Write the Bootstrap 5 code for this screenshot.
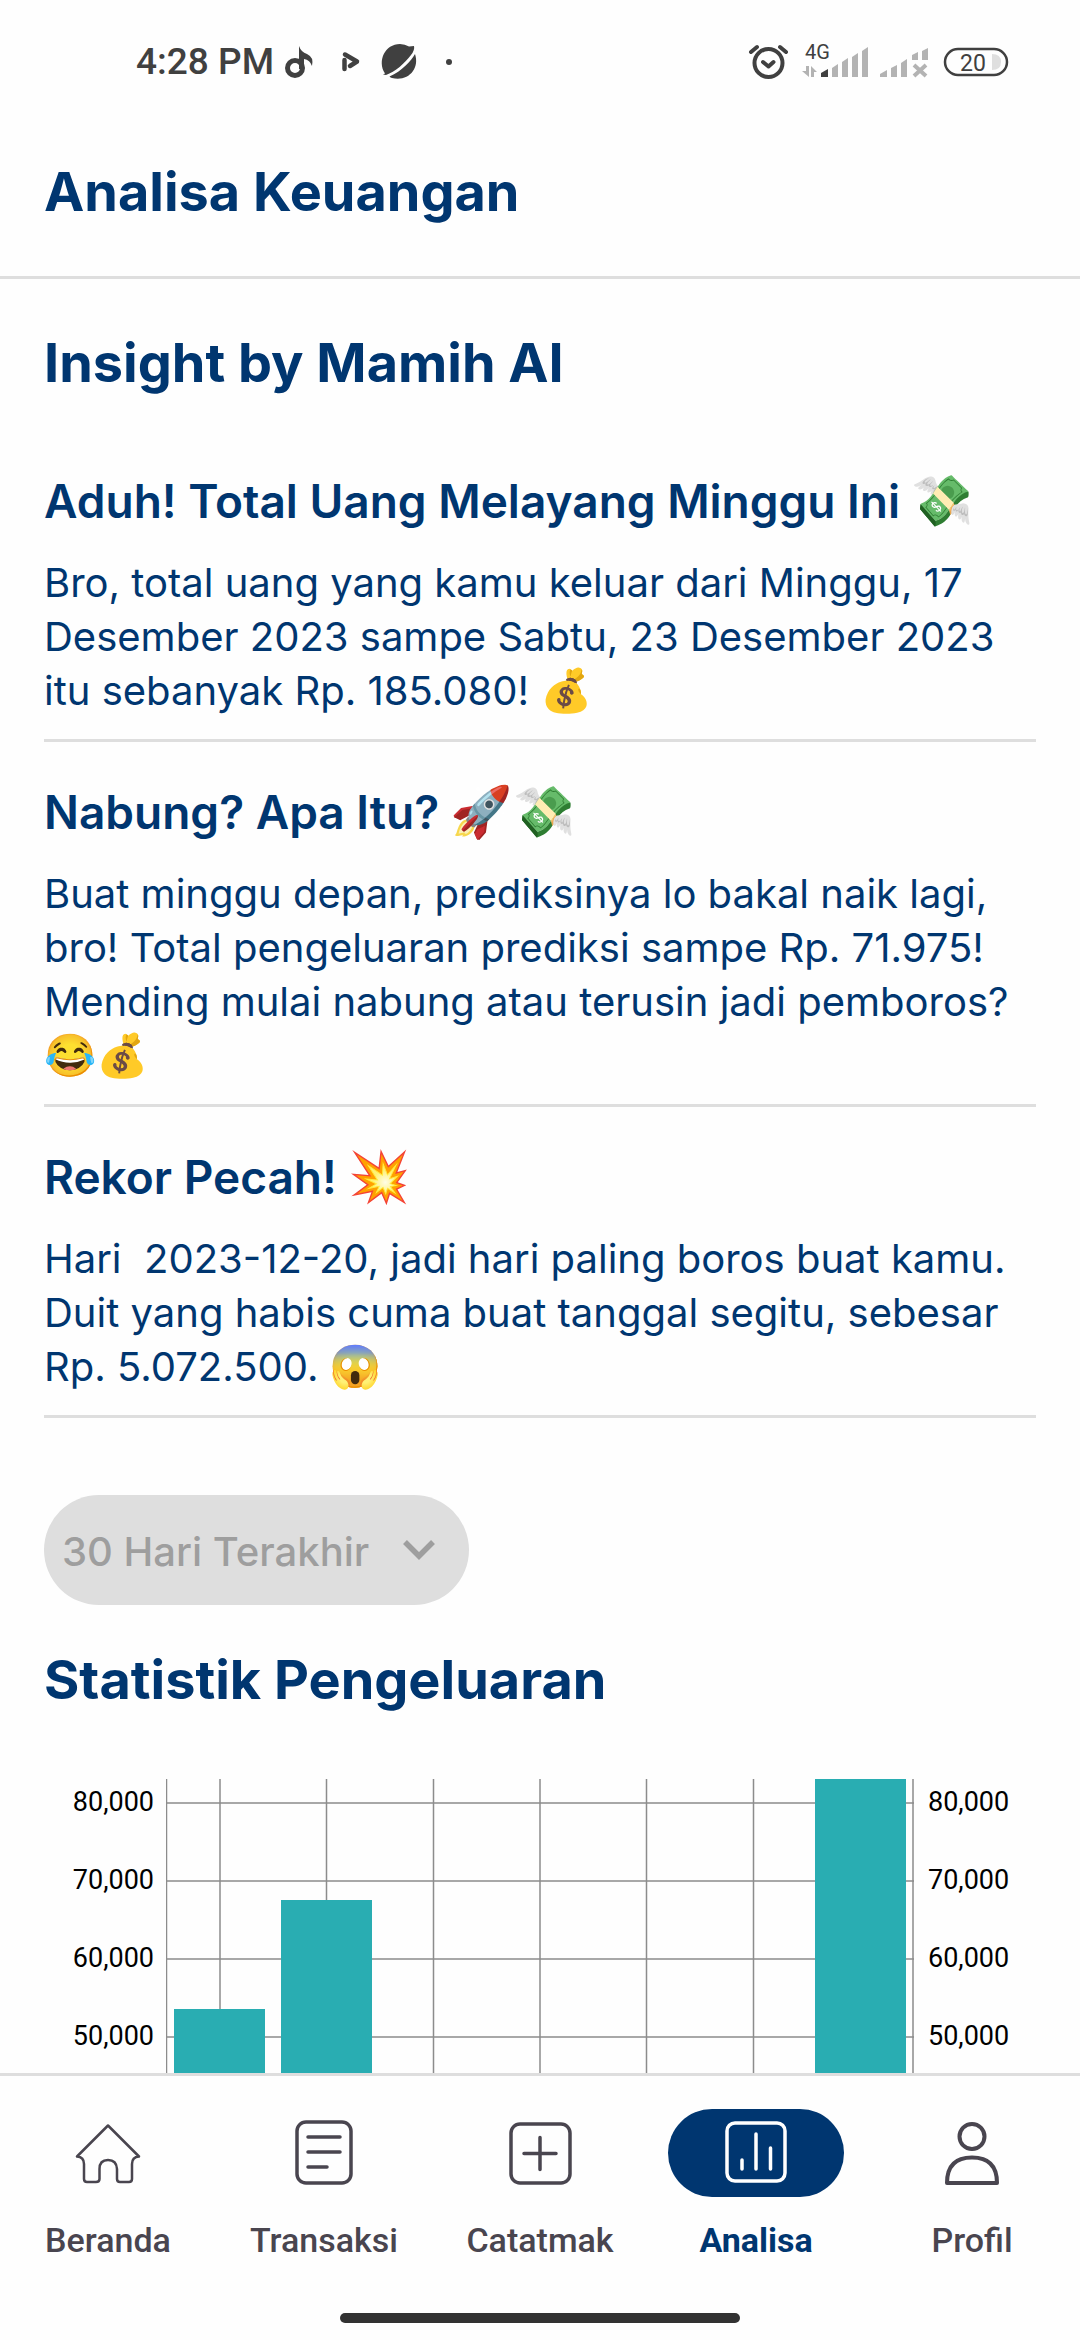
<!DOCTYPE html>
<html lang="id">
<head>
<meta charset="utf-8">
<meta name="viewport" content="width=device-width, initial-scale=1">
<title>Analisa Keuangan</title>
<link href="https://cdn.jsdelivr.net/npm/bootstrap@5.3.0/dist/css/bootstrap.min.css" rel="stylesheet">
<style>
:root { --navy: #003670; --line: #dedede; --ink: #49454f; }
body { font-family: Inter, "Liberation Sans", "Noto Color Emoji", sans-serif; color: var(--navy); background: #fefefe; }
.status-bar { height: 124px; padding: 0 71px 0 136px; color: #404040; font: 500 37px/44px Roboto, sans-serif; }
.status-art { margin-left: 6px; }
.app-header { height: 155px; border-bottom: 3px solid var(--line); padding: 0 44px; }
.screen-title { font-size: 54px; line-height: 72px; font-weight: 700; margin: 0; }
.app-header .screen-title { margin-top: 32px; }
.content-pane { padding: 48px 44px 0; min-height: 0; }
.insight { border-bottom: 3px solid var(--line); padding: 34px 0 21px; }
.insight-list { padding-top: 32px; }
.insight h3 { font-size: 46px; line-height: 72px; font-weight: 600; margin: 0 0 19px; }
.insight p { font-size: 40px; line-height: 54px; margin: 0; white-space: pre-wrap; }
.emo { font-size: 42px; line-height: 40px; }
h3 .emo { font-size: 50px; }
.period-btn { height: 110px; margin: 77px 0 39px; padding: 4px 30px 0 18px; background: var(--line); color: #9e9e9e; font-size: 40px; font-weight: 500; }
.period-btn svg { margin-left: 30px; }
.chart-row { height: 294px; margin-top: 63px; }
.axis-col { width: 122px; color: #000; font: 400 27px/30px Roboto, sans-serif; padding: 8px 12px 0 14px; gap: 48px; }
.bottom-nav { height: 267px; border-top: 3px solid var(--line); background: #fefefe; }
.nav-tab { flex: 1 1 0; color: var(--ink); font: 500 34px/40px Roboto, sans-serif; text-decoration: none; }
.nav-tab.active { color: var(--navy); font-weight: 700; }
.tab-icon { width: 176px; height: 88px; border-radius: 44px; margin: 33px 0 23px; }
.active .tab-icon { background: var(--navy); color: #fff; }
.home-bar { width: 400px; height: 10px; border-radius: 5px; background: #323232; margin: 0 auto 17px; }
svg { display: block; flex: none; }
svg text { font-weight: 400; }
</style>
</head>
<body>
<div class="vh-100 d-flex flex-column overflow-hidden">
  <div class="status-bar d-flex align-items-center flex-shrink-0">
    <span>4:28 PM</span>
    <svg class="status-art" width="180" height="44" viewBox="280 40 180 44" fill="currentColor" aria-hidden="true">
      <circle cx="295" cy="68" r="7.5" fill="none" stroke="currentColor" stroke-width="5"/>
      <path d="M299 46q2 6 8 8q7 3 5 12q-2-6-8-7v10h-5z"/>
      <g fill="none" stroke="currentColor" stroke-width="4.5" stroke-linecap="round" stroke-linejoin="round"><path d="M344.500 60v9M345 54.500l12 7l-7 4.500"/></g>
      <path d="M385 73.500C377 61 385 44 400 44q5 0 9 2.500l5-.5q1 4-3 9c-6 8-16 17-25 20l-3-.5z"/>
      <path d="M415 54c5 15-7 28-23 24q-1.500-.5-2.500-1.500C402 71 411 61 415 54z"/>
      <circle cx="449" cy="62" r="3"/>
    </svg>
    <svg class="ms-auto" width="262" height="44" viewBox="746 40 262 44" fill="#b3b3b3" aria-hidden="true">
      <g fill="none" stroke="#404040" stroke-width="4" stroke-linecap="round" stroke-linejoin="round"><circle cx="767.500" cy="63" r="14"/><path d="M750 52l6-5M785 52l-6-5M762 62l5.500 4.500l5-4.500"/></g>
      <text x="804" y="58.500" font-size="20" fill="#404040">4G</text>
      <path d="M805 66h3v11l-7-6h4zM810 66l6 6h-3v5h-3z"/>
      <path fill="#404040" d="M820 77v-4l7-4v8z"/>
      <path d="M831 77V68l6-4v13zM841 77V62l6-4v19zM851 77V57l6-4v24zM861 77V51l6-4v30zM879 77v-3l7-4v7zM890 77V68l6-3v12zM900 77V63l6-4v18zM911 60v-5l6-3v8zM921 60V51l6-3v12z"/>
      <path d="M913 65l12 11M925 65l-12 11" stroke="#b3b3b3" stroke-width="4"/>
      <rect x="944" y="49" width="62" height="26" rx="13" fill="none" stroke="#404040" stroke-width="2.500"/>
      <path fill="#dfdfdf" d="M991 54q9 0 9 8t-9 8z"/>
      <text x="959" y="70.500" font-size="23" fill="#404040">20</text>
    </svg>
  </div>

  <header class="app-header flex-shrink-0"><h1 class="screen-title">Analisa Keuangan</h1></header>

  <main class="content-pane flex-grow-1 overflow-hidden">
    <h2 class="screen-title">Insight by Mamih AI</h2>
    <div class="insight-list">
      <article class="insight"><h3>Aduh! Total Uang Melayang Minggu Ini <span class="emo">💸</span></h3><p>Bro, total uang yang kamu keluar dari Minggu, 17 Desember 2023 sampe Sabtu, 23 Desember 2023 itu sebanyak Rp. 185.080! <span class="emo">💰</span></p></article>
      <article class="insight"><h3>Nabung? Apa Itu? <span class="emo">🚀💸</span></h3><p>Buat minggu depan, prediksinya lo bakal naik lagi, bro! Total pengeluaran prediksi sampe Rp. 71.975! Mending mulai nabung atau terusin jadi pemboros? <span class="emo">😂💰</span></p></article>
      <article class="insight"><h3>Rekor Pecah! <span class="emo">💥</span></h3><p>Hari  2023-12-20, jadi hari paling boros buat kamu. Duit yang habis cuma buat tanggal segitu, sebesar Rp. 5.072.500. <span class="emo">😱</span></p></article>
    </div>
    <button type="button" class="period-btn btn rounded-pill border-0 d-flex align-items-center">30 Hari Terakhir
      <svg width="40" height="28" viewBox="0 0 40 28" fill="none" stroke="currentColor" stroke-width="5.500" aria-hidden="true"><path d="M6 4l14 14L34 4"/></svg>
    </button>
    <h2 class="screen-title">Statistik Pengeluaran</h2>
    <div class="chart-row d-flex">
      <div class="axis-col d-flex flex-column text-end"><span>80,000</span><span>70,000</span><span>60,000</span><span>50,000</span></div>
      <svg class="flex-fill" style="width:0" height="294" viewBox="0 0 748 294" preserveAspectRatio="none" role="img" aria-label="Grafik pengeluaran">
        <path stroke="#8c8c8c" stroke-width="1.500" fill="none" d="M.5 0v294M54 0v294M160.500 0v294M267.500 0v294M374 0v294M480.500 0v294M587.500 0v294M747 0v294M0 24h748M0 102h748M0 180h748M0 258h748"/>
        <path fill="#29adb2" d="M8 230h91v64H8zM115 121h91v173h-91zM649 0h91v294h-91z"/>
      </svg>
      <div class="axis-col d-flex flex-column"><span>80,000</span><span>70,000</span><span>60,000</span><span>50,000</span></div>
    </div>
  </main>

  <nav class="bottom-nav d-flex flex-column flex-shrink-0">
    <div class="d-flex flex-fill">
      <a href="#" class="nav-tab d-flex flex-column align-items-center"><span class="tab-icon d-flex align-items-center justify-content-center"><svg width="68" height="68" viewBox="0 0 68 68" fill="none" stroke="currentColor" stroke-width="2.500" stroke-linejoin="round"><path d="M34 6.500L3 37.500Q10 38 10 45V60Q10 63 13 63H22Q25.500 63 25.500 60V50Q25.500 41 34 41T43 50V60Q43 63 46 63H55Q58 63 58 60V45Q58 38 65 37.500Z"/></svg></span>Beranda</a>
      <a href="#" class="nav-tab d-flex flex-column align-items-center"><span class="tab-icon d-flex align-items-center justify-content-center"><svg width="68" height="68" viewBox="0 0 68 68" fill="none" stroke="currentColor" stroke-width="3.500" stroke-linecap="round"><rect x="7" y="3" width="54" height="61" rx="9"/><path d="M18 18H50M18 33H50M18 48H37"/></svg></span>Transaksi</a>
      <a href="#" class="nav-tab d-flex flex-column align-items-center"><span class="tab-icon d-flex align-items-center justify-content-center"><svg width="68" height="68" viewBox="0 0 68 68" fill="none" stroke="currentColor" stroke-width="3.500" stroke-linecap="round"><rect x="5" y="5" width="59" height="59" rx="9"/><path d="M18 34.500H50M34 18.500V50.500"/></svg></span>Catatmak</a>
      <a href="#" class="nav-tab active d-flex flex-column align-items-center" aria-current="page"><span class="tab-icon d-flex align-items-center justify-content-center"><svg width="68" height="68" viewBox="0 0 68 68" fill="none" stroke="currentColor" stroke-width="3.500" stroke-linecap="round"><rect x="5" y="4" width="58" height="58" rx="8"/><path d="M20 41V50M34 15V50M48.500 29V50"/></svg></span>Analisa</a>
      <a href="#" class="nav-tab d-flex flex-column align-items-center"><span class="tab-icon d-flex align-items-center justify-content-center"><svg width="68" height="68" viewBox="0 0 68 68" fill="none" stroke="currentColor" stroke-width="4" stroke-linejoin="round"><circle cx="34" cy="17.500" r="12.500"/><path d="M9 64Q9 38.500 34 38.500T59 64Z"/></svg></span>Profil</a>
    </div>
    <div class="home-bar"></div>
  </nav>
</div>
<script src="https://cdn.jsdelivr.net/npm/bootstrap@5.3.0/dist/js/bootstrap.bundle.min.js"></script>
</body>
</html>
